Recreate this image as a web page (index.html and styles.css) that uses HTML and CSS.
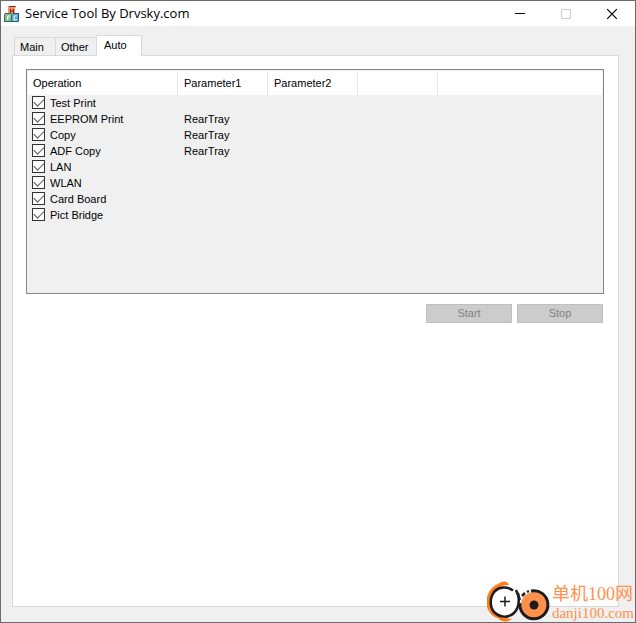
FILE: index.html
```html
<!DOCTYPE html>
<html lang="en">
<head>
    <meta charset="UTF-8">
    <meta name="viewport" content="width=device-width, initial-scale=1.0">
    <title>Service Tool By Drvsky.com</title>
    <link rel="stylesheet" href="styles.css">
</head>
<body>

    <div class="window">
        <header class="titlebar">
            <svg class="app-icon" width="16" height="16" viewBox="0 0 16 16" aria-hidden="true">
                <path d="M4 2l1-2h7l-1 2v6H4z" fill="#8c2f14"/>
                <rect x="4" y="1" width="7" height="7" fill="#eb9468"/>
                <path d="M6.500 3v4M9.500 3v4M6 5h3" stroke="#a01c08" fill="none"/>
                <path d="M0 9l1-2h6l1 2v7H0z" fill="#3d6b4c"/>
                <rect x="1" y="8" width="6" height="7" fill="#7abf94"/>
                <path d="M3.500 14v-4h3M3 12h2" stroke="#f2fff2" fill="none"/>
                <path d="M8 9l1-2h6v8l-1 1H8z" fill="#25577c"/>
                <rect x="8" y="8" width="6" height="7" fill="#5ba6d8"/>
                <path d="M13 10h-3v4h3" stroke="#e8f6ff" fill="none"/>
            </svg>
            <h1 class="title">Service Tool By Drvsky.com</h1>
            <div class="window-controls">
                <button type="button" class="control" aria-label="Minimize">
                    <svg width="10" height="10" viewBox="0 0 10 10"><path d="M0 4.500h10" stroke="#000"/></svg>
                </button>
                <button type="button" class="control" aria-label="Maximize" disabled>
                    <svg width="10" height="10" viewBox="0 0 10 10"><path d="M.5.5h9v9h-9z" stroke="#ccc" fill="none"/></svg>
                </button>
                <button type="button" class="control" aria-label="Close">
                    <svg width="10" height="10" viewBox="0 0 10 10"><path d="M0 0l10 10M10 0L0 10" stroke="#000" stroke-width="1.200"/></svg>
                </button>
            </div>
        </header>

        <main class="content">
            <div class="tabs" role="tablist">
                <button type="button" class="tab" role="tab">Main</button>
                <button type="button" class="tab" role="tab">Other</button>
                <button type="button" class="tab active" role="tab" aria-selected="true">Auto</button>
            </div>

            <section class="panel">
                <div class="list">
                    <table class="operations">
                        <colgroup>
                            <col class="col-operation">
                            <col class="col-parameter">
                            <col class="col-parameter">
                            <col class="col-blank">
                            <col>
                        </colgroup>
                        <thead>
                            <tr><th>Operation</th><th>Parameter1</th><th>Parameter2</th><th></th><th></th></tr>
                        </thead>
                        <tbody>
                            <tr><td><label><input type="checkbox" checked>Test Print</label></td><td></td><td></td><td></td><td></td></tr>
                            <tr><td><label><input type="checkbox" checked>EEPROM Print</label></td><td>RearTray</td><td></td><td></td><td></td></tr>
                            <tr><td><label><input type="checkbox" checked>Copy</label></td><td>RearTray</td><td></td><td></td><td></td></tr>
                            <tr><td><label><input type="checkbox" checked>ADF Copy</label></td><td>RearTray</td><td></td><td></td><td></td></tr>
                            <tr><td><label><input type="checkbox" checked>LAN</label></td><td></td><td></td><td></td><td></td></tr>
                            <tr><td><label><input type="checkbox" checked>WLAN</label></td><td></td><td></td><td></td><td></td></tr>
                            <tr><td><label><input type="checkbox" checked>Card Board</label></td><td></td><td></td><td></td><td></td></tr>
                            <tr><td><label><input type="checkbox" checked>Pict Bridge</label></td><td></td><td></td><td></td><td></td></tr>
                        </tbody>
                    </table>
                </div>
                <div class="actions">
                    <button type="button" class="btn" disabled>Start</button>
                    <button type="button" class="btn" disabled>Stop</button>
                </div>
            </section>
        </main>
    </div>

    <!-- Site badge -->
    <div class="badge">
        <svg width="64" height="43" viewBox="0 0 64 43" aria-hidden="true">
            <path d="M22 5C20 0 15 1 11 4 2 8-2 17 0 27c2 6 6 10 11 11 3 4 9 5 14 1C12 38 3 32 3 21 3 12 10 5 22 5z" fill="#ff7d1a"/>
            <path d="M25 10C19 6 13 6 8 11 2 17 3 27 7 32c6 6 15 6 20 1 3-3 5-7 5-13L28 10z" fill="#fff"/>
            <path d="M26 10.500C20 6 12 7 8 11 2 17 3 27 7 32c6 6 15 6 20 1 4-4 6-10 4-20" stroke="#1f1a1c" stroke-width="2.500" fill="none"/>
            <circle cx="47" cy="25" r="13" fill="#ff914d"/>
            <path d="M44 11A14 14 0 1 1 33 23" stroke="#1f1a1c" stroke-width="3" fill="none"/>
            <path d="M29 10l4 10M35 16l3-3M40 12l2-1" stroke="#1f1a1c" stroke-width="2.500" fill="none"/>
            <path d="M13 21.500h10M18 16.500v10" stroke="#1f1a1c" stroke-width="1.500" fill="none"/>
            <circle cx="47" cy="25" r="4.500" fill="#1f1a1c"/>
        </svg>
        <div class="badge-text">
            <span class="badge-name" lang="zh">单机100网</span>
            <span class="badge-url">danji100.com</span>
        </div>
    </div>

</body>
</html>
```
FILE: styles.css
```css
/* Base styles */
* {
    box-sizing: border-box;
}

body {
    margin: 0;
    font-family: "Liberation Sans", Arial, sans-serif;
    font-size: 11px;
    line-height: 16px;
    color: #000;
}

button {
    font: inherit;
    color: inherit;
    padding: 0;
}

.window {
    display: flex;
    flex-direction: column;
    min-height: 100vh;
    background: #f0f0f0;
    border: 1px solid #6b6b6b;
}

/* Title bar */
.titlebar {
    display: flex;
    align-items: center;
    height: 25px;
    padding-left: 3px;
    background: #fff;
}

.title {
    flex: 1;
    margin: 0 0 2px 5px;
    font-family: "Open Sans", sans-serif;
    font-size: 13px;
    font-weight: normal;
}

.window-controls {
    display: flex;
}

.control {
    display: flex;
    align-items: center;
    justify-content: center;
    width: 46px;
    height: 25px;
    border: none;
    background: none;
}

/* Tabs */
.content {
    flex: 1;
    display: flex;
    flex-direction: column;
    padding: 9px 16px 15px 11px;
}

.tabs {
    display: flex;
    align-items: flex-end;
    padding-left: 2px;
}

.tab {
    height: 18px;
    padding: 0 5px;
    min-width: 41px;
    text-align: left;
    border: 1px solid #d9d9d9;
    border-width: 1px 0 0 1px;
    background: #f0f0f0;
}

.tab.active {
    z-index: 1;
    height: 21px;
    min-width: 46px;
    margin-bottom: -1px;
    padding: 0 7px 2px;
    border-right-width: 1px;
    background: #fff;
}

.panel {
    flex: 1;
    padding: 13px 14px 13px 13px;
    border: 1px solid #d9d9d9;
    background: #fff;
}

/* Operation list */
.list {
    min-height: 225px;
    padding: 1px;
    border: 1px solid #828790;
    background: #f0f0f0;
}

.operations {
    width: 100%;
    table-layout: fixed;
    border-collapse: separate;
    border-spacing: 0;
}

.col-operation {
    width: 150px;
}

.col-parameter {
    width: 90px;
}

.col-blank {
    width: 80px;
}

.operations th {
    height: 24px;
    padding: 0 6px;
    text-align: left;
    font-weight: normal;
    background: #fff;
    border-right: 1px solid #e5e5e5;
}

.operations th:first-child {
    padding: 0 5px;
}

.operations th:last-child {
    border-right: none;
}

.operations td {
    height: 16px;
    padding: 0 6px;
}

.operations td:first-child {
    padding: 0 4px;
}

.operations label {
    display: flex;
    align-items: flex-start;
    gap: 5px;
}

.operations input {
    appearance: none;
    width: 13px;
    height: 13px;
    margin: 1px 0 0;
    border: 1px solid #333;
    background: #fff;
}

.operations input:checked::before {
    content: "";
    display: block;
    width: 9px;
    height: 5px;
    margin: 2px 1px;
    border: solid #555;
    border-width: 0 0 1px 1px;
    transform: translateY(-1px) rotate(-45deg);
}

/* Buttons */
.actions {
    display: flex;
    justify-content: flex-end;
    gap: 5px;
    margin-top: 10px;
    padding-right: 1px;
}

.btn {
    width: 86px;
    height: 19px;
    padding-bottom: 1px;
    border: 1px solid #bfbfbf;
    background: #ccc;
    color: #838383;
}

/* Site badge */
.badge {
    position: absolute;
    right: 2px;
    bottom: 0;
    z-index: 2;
    display: flex;
    align-items: center;
    gap: 1px;
}

.badge-text {
    display: flex;
    flex-direction: column;
    color: #ff914d;
    font-family: "Liberation Serif", "Noto Sans CJK SC", serif;
}

.badge-name {
    font-size: 18px;
    line-height: 22px;
}

.badge-url {
    font-size: 15px;
    line-height: 16px;
}
```
